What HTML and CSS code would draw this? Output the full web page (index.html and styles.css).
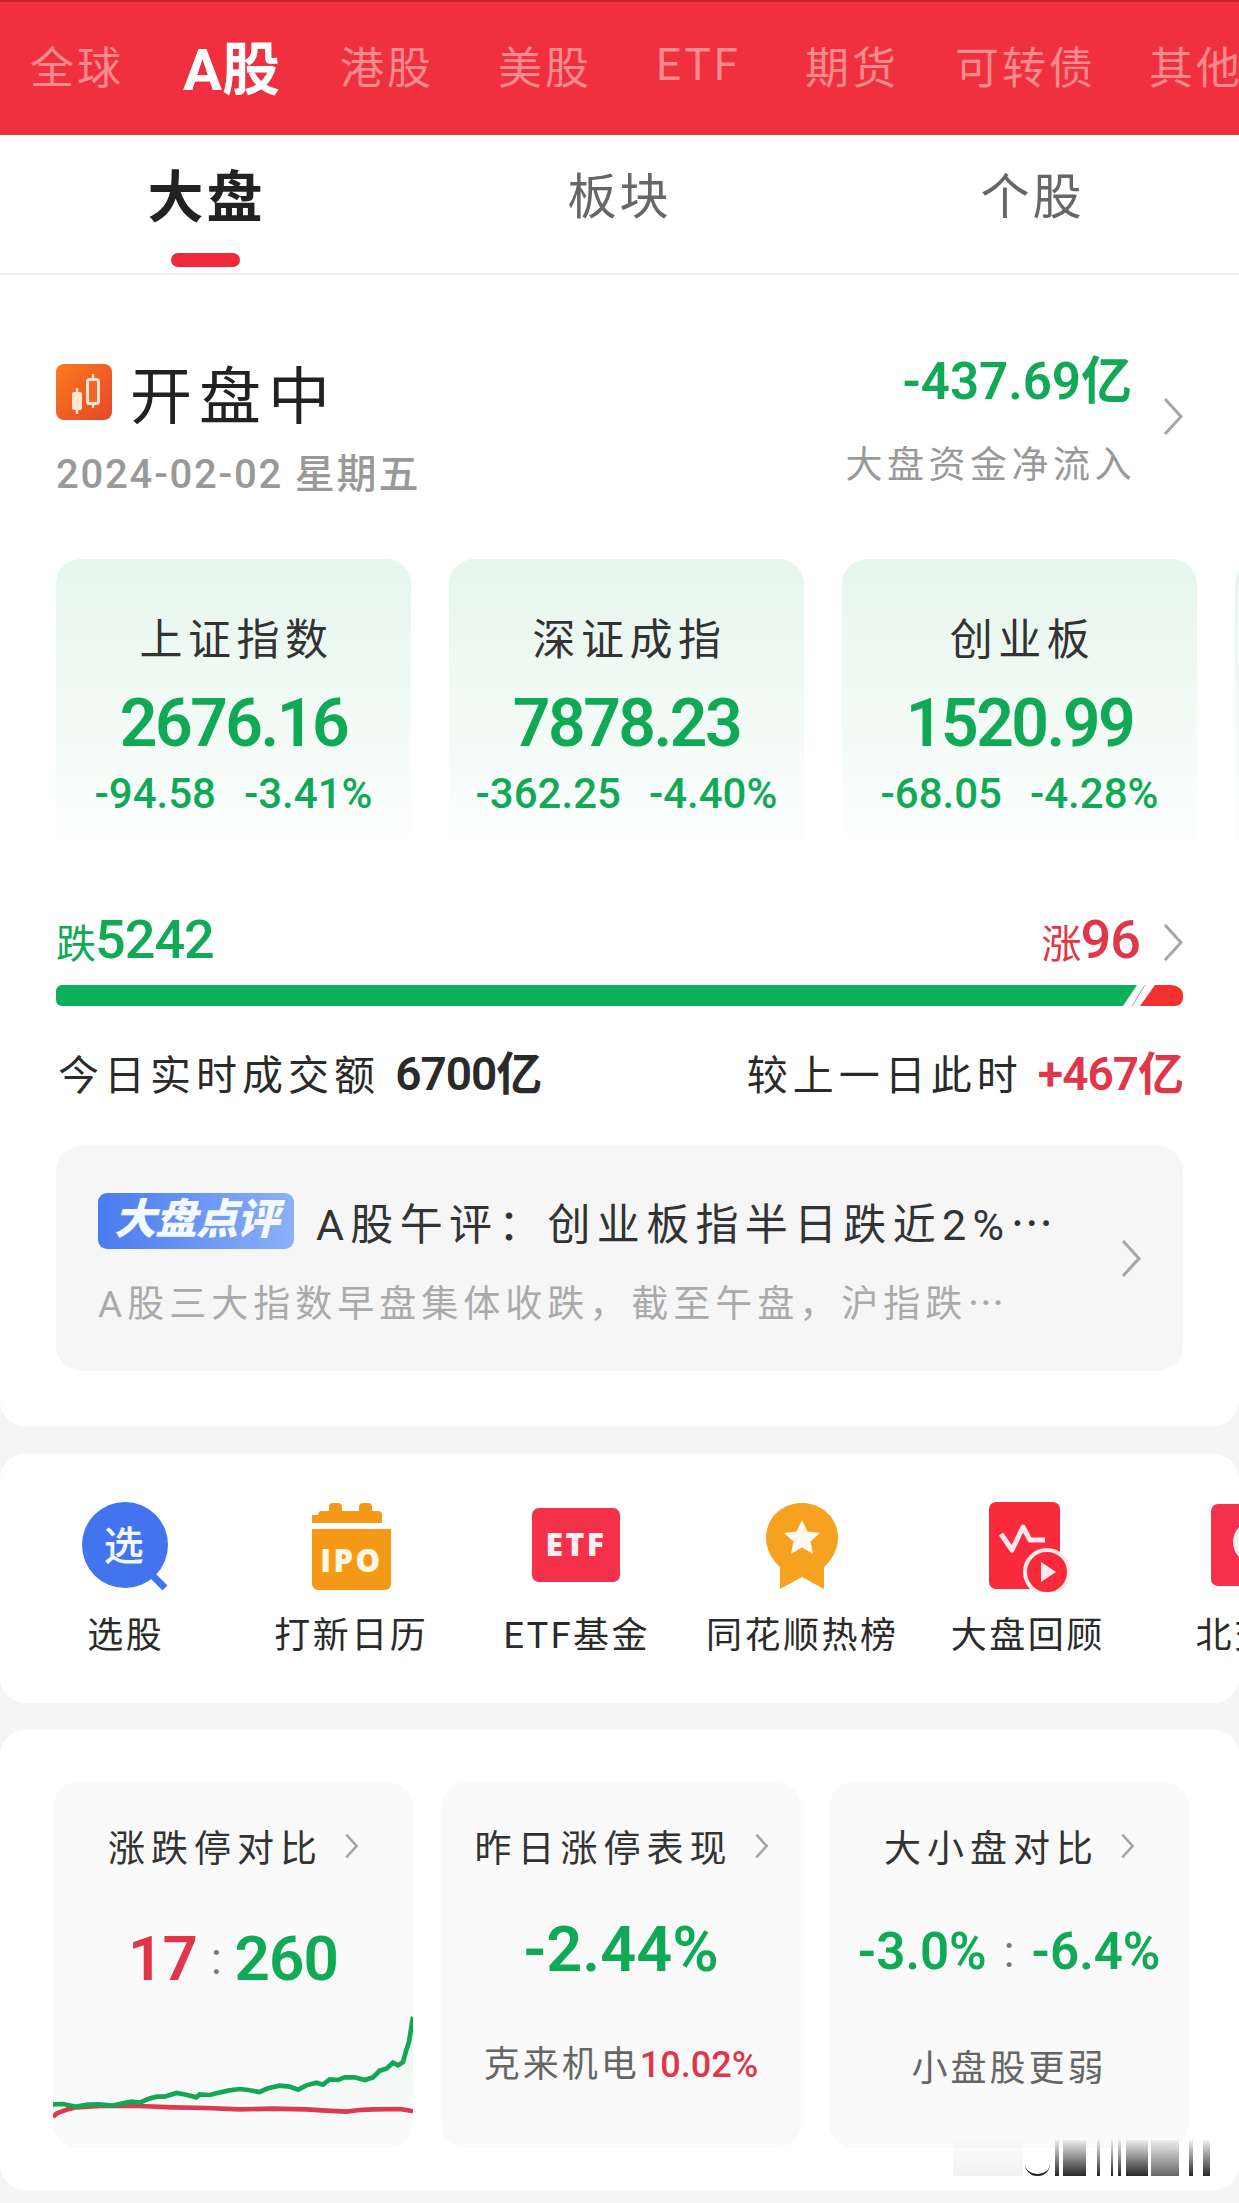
FILE: index.html
```html
<!DOCTYPE html>
<html lang="zh-CN">
    <head>
        <meta charset="utf-8">
        <title>A股 大盘</title>
        <link rel="stylesheet" href="styles.css">
    </head>
    <body>
        <div id="main">
            <div class="market-bar">
                <span class="market">全球</span>
                <span class="market active">A股</span>
                <span class="market">港股</span>
                <span class="market">美股</span>
                <span class="market">ETF</span>
                <span class="market">期货</span>
                <span class="market market-cb">可转债</span>
                <span class="market market-other">其他</span>
            </div>

            <div class="sub-tabs">
                <div class="sub-tab active">大盘<i class="tab-line"></i></div>
                <div class="sub-tab">板块</div>
                <div class="sub-tab">个股</div>
            </div>

            <div class="panel overview">
                <div class="status-row">
                    <div>
                        <div class="status-title">
                            <svg class="status-icon" viewBox="0 0 56 56">
                                <defs>
                                    <linearGradient id="orange" x1="0" y1="0" x2="1" y2="1">
                                        <stop offset="0" stop-color="#fb7a1c"/>
                                        <stop offset="1" stop-color="#e5472a"/>
                                    </linearGradient>
                                </defs>
                                <rect width="56" height="56" rx="8" fill="url(#orange)"/>
                                <path d="M21 24v26M37 10v34" stroke="#fde3d2" stroke-width="2.5"/>
                                <rect x="16" y="28" width="10" height="18" rx="2" fill="#fde3d2"/>
                                <rect x="31.5" y="15.5" width="11" height="24" rx="2" fill="#ee6a2a" stroke="#fde3d2" stroke-width="3"/>
                            </svg>
                            <span>开盘中</span>
                        </div>
                        <div class="status-date">2024-02-02 星期五</div>
                    </div>
                    <div class="flow">
                        <div>
                            <div class="flow-value">-437.69亿</div>
                            <div class="flow-label">大盘资金净流入</div>
                        </div>
                        <svg class="chevron flow-arrow" viewBox="0 0 20 37"><path d="M2 1l16 17.500L2 36"/></svg>
                    </div>
                </div>

                <div class="index-row">
                    <div class="index-card">
                        <div class="index-name">上证指数</div>
                        <div class="index-value">2676.16</div>
                        <div class="index-change"><span>-94.58</span><span>-3.41%</span></div>
                    </div>
                    <div class="index-card">
                        <div class="index-name">深证成指</div>
                        <div class="index-value">7878.23</div>
                        <div class="index-change"><span>-362.25</span><span>-4.40%</span></div>
                    </div>
                    <div class="index-card">
                        <div class="index-name">创业板</div>
                        <div class="index-value">1520.99</div>
                        <div class="index-change"><span>-68.05</span><span>-4.28%</span></div>
                    </div>
                    <div class="index-card"></div>
                </div>

                <div class="count-row">
                    <div class="count green"><small>跌</small>5242</div>
                    <div class="count-right">
                        <div class="count red"><small>涨</small>96</div>
                        <svg class="chevron" viewBox="0 0 20 37"><path d="M2 1l16 17.500L2 36"/></svg>
                    </div>
                </div>

                <svg class="ratio-bar" viewBox="0 0 1127 21">
                    <path d="M6 0H1081L1067 21H6a6 6 0 0 1-6-6V6a6 6 0 0 1 6-6z" fill="#0bb05a"/>
                    <path d="M1089 0L1076 21" stroke="#9aa5a0" stroke-width="1"/>
                    <path d="M1099 0H1115a12 10 0 0 1 12 10v3a8 8 0 0 1-8 8H1084z" fill="#f5312f"/>
                </svg>

                <div class="volume-row">
                    <div>今日实时成交额 <b>6700亿</b></div>
                    <div>较上一日此时 <b class="red">+467亿</b></div>
                </div>

                <div class="comment">
                    <div class="comment-body">
                        <div class="comment-title">
                            <span class="comment-badge">大盘点评</span>
                            <span>A股午评：创业板指半日跌近2%<span class="cjk">…</span></span>
                        </div>
                        <div class="comment-text">A股三大指数早盘集体收跌，截至午盘，沪指跌<span class="cjk">…</span></div>
                    </div>
                    <svg class="chevron" viewBox="0 0 20 37"><path d="M2 1l16 17.500L2 36"/></svg>
                </div>
            </div>

            <div class="panel shortcuts">
                <div class="shortcut">
                    <svg class="shortcut-icon" viewBox="0 0 90 90">
                        <ellipse cx="44" cy="43" rx="43" ry="43" fill="#4274f0"/>
                        <path d="M68 70l16 16" stroke="#4274f0" stroke-width="7"/>
                        <text x="44" y="58" class="icon-cjk" font-size="40" fill="#f4f7ff" text-anchor="middle">选</text>
                    </svg>
                    <div>选股</div>
                </div>
                <div class="shortcut">
                    <svg class="shortcut-icon" viewBox="0 0 90 90">
                        <path d="M12 11a4 4 0 0 1 4-4h7v-4a4 4 0 0 1 4-4h5a4 4 0 0 1 4 4v4h17v-4a4 4 0 0 1 4-4h5a4 4 0 0 1 4 4v4h6a4 4 0 0 1 4 4v8H6v-8a4 4 0 0 1 0 0z" fill="#f59a16" transform="translate(0 2)"/>
                        <path d="M6 27h79v55a6 6 0 0 1-6 6H12a6 6 0 0 1-6-6z" fill="#f59a16"/>
                        <text x="45.500" y="70" class="icon-latin" font-size="31" fill="#fff6e4" text-anchor="middle">IPO</text>
                    </svg>
                    <div>打新日历</div>
                </div>
                <div class="shortcut">
                    <svg class="shortcut-icon" viewBox="0 0 90 90">
                        <rect y="6" width="88" height="74" rx="7" fill="#f5304a"/>
                        <text x="44" y="54" class="icon-latin" font-size="32" fill="#fdeef0" text-anchor="middle">ETF</text>
                    </svg>
                    <div>ETF基金</div>
                </div>
                <div class="shortcut">
                    <svg class="shortcut-icon" viewBox="0 0 90 90">
                        <path d="M45 1C25 1 9 16 9 36c0 13 8 24 14 29v22l22-12 22 12V65c6-5 14-16 14-29C81 16 65 1 45 1z" fill="#f6a11f"/>
                        <path d="M45 18l5.500 11.500 12.500 1.500-9.500 8.500 2.500 12.500-11-6.500-11 6.500 2.500-12.500-9.500-8.500 12.500-1.500z" fill="#fffaf0"/>
                    </svg>
                    <div>同花顺热榜</div>
                </div>
                <div class="shortcut">
                    <svg class="shortcut-icon" viewBox="0 0 90 90">
                        <rect x="6" width="71" height="87" rx="7" fill="#f92a3c"/>
                        <path d="M18 32l11 16 11-23 7 13h15" fill="none" stroke="#fdeaec" stroke-width="5" stroke-linejoin="round"/>
                        <circle cx="64" cy="70" r="22" fill="#f92a3c" stroke="#fdeaec" stroke-width="4"/>
                        <path d="M58 60l15 10-15 10z" fill="#fdeaec"/>
                    </svg>
                    <div>大盘回顾</div>
                </div>
                <div class="shortcut">
                    <svg class="shortcut-icon" viewBox="0 0 90 90">
                        <rect x="3" y="2" width="88" height="82" rx="7" fill="#f5304a"/>
                        <circle cx="47" cy="40" r="22" fill="#fdeef0"/>
                    </svg>
                    <div>北交所</div>
                </div>
            </div>

            <div class="panel compare">
                <div class="compare-card">
                    <div class="compare-title">涨跌停对比<svg class="chevron small" viewBox="0 0 20 37"><path d="M2 1l16 17.500L2 36"/></svg></div>
                    <div class="limit-value"><span class="red">17</span><i>:</i><span class="green">260</span></div>
                    <svg class="limit-chart" viewBox="40 0 1080 444" preserveAspectRatio="none">
                        <defs>
                            <linearGradient id="chartfill" x1="0" y1="0" x2="0" y2="1">
                                <stop offset="0" stop-color="#d9f2e3" stop-opacity=".9"/>
                                <stop offset="1" stop-color="#fafafa" stop-opacity="0"/>
                            </linearGradient>
                        </defs>
                        <path d="M1120 50L1110 110 1100 150 1085 190 1060 190 1020 212 975 238 930 232 870 238 830 248 775 268 720 258 660 275 600 268 530 282 470 290 410 280 350 290 300 305 300 400 1120 400z" fill="url(#chartfill)"/>
                        <path class="line-red" d="M40 350L52 340 65 335 85 328 110 322 180 318 300 318 400 322 500 324 600 328 700 326 800 328 860 332 920 335 960 330 1000 328 1080 327 1100 330 1120 334"/>
                        <path class="line-green" d="M40 313L70 312 110 320 145 314 180 313 215 317 250 310 275 305 300 308 325 297 350 290 375 290 410 279 440 284 470 292 480 283 510 285 530 280 565 272 600 267 625 270 660 276 685 265 720 257 750 260 775 269 800 256 830 248 850 254 870 238 895 240 915 232 945 232 975 240 1000 232 1020 212 1040 206 1060 188 1075 196 1090 186 1100 150 1108 125 1112 100 1120 50"/>
                    </svg>
                </div>
                <div class="compare-card">
                    <div class="compare-title">昨日涨停表现<svg class="chevron small" viewBox="0 0 20 37"><path d="M2 1l16 17.500L2 36"/></svg></div>
                    <div class="big-value green">-2.44%</div>
                    <div class="compare-note">克来机电<span class="red">10.02%</span></div>
                </div>
                <div class="compare-card">
                    <div class="compare-title">大小盘对比<svg class="chevron small" viewBox="0 0 20 37"><path d="M2 1l16 17.500L2 36"/></svg></div>
                    <div class="pair-value green"><span>-3.0%</span><i>:</i><span>-6.4%</span></div>
                    <div class="compare-note pair-note">小盘股更弱</div>
                </div>
                <!-- blurred watermark over the corner -->
                <div class="watermark">
                    <i class="mark-soft" style="width: 70px"></i>
                    <i class="mark-u"></i>
                    <i style="width: 4px; margin-left: 5px"></i>
                    <i style="width: 23px; margin-left: 4px"></i>
                    <i style="width: 3px; margin-left: 11px"></i>
                    <i style="width: 2px; margin-left: 11px"></i>
                    <i style="width: 3px; margin-left: 5px"></i>
                    <i style="width: 22px; margin-left: 5px"></i>
                    <i class="mark-grey" style="width: 28px; margin-left: 3px"></i>
                    <i style="width: 4px; margin-left: 10px"></i>
                    <i style="width: 7px; margin-left: 10px"></i>
                </div>
            </div>
        </div>
    </body>
</html>
```

FILE: styles.css
```css
*  {
    box-sizing: border-box;
}

html, body  {
    margin: 0;
    padding: 0;
}

body  {
    background-color: #f5f5f5;
    font-family: Roboto, "Noto Sans CJK SC", sans-serif;
    color: #333333;
}

#main  {
    width: 1239px;
    height: 2203px;
    overflow: hidden;
}

.red  {
    color: #e0364a;
}

.green  {
    color: #10a955;
}

.cjk  {
    font-family: "Noto Sans CJK SC", sans-serif;
}

/* top market tabs */
.market-bar  {
    display: flex;
    align-items: center;
    gap: 64px;
    height: 135px;
    padding: 0 0 8px 30px;
    background-color: #f0303e;
    border-top: 2px solid #c9202d;
    white-space: nowrap;
    overflow: hidden;
}

.market  {
    flex-shrink: 0;
    font-size: 44px;
    letter-spacing: 3px;
    color: #f68a8e;
}

.market.active  {
    margin-left: -5px;
    margin-right: -4px;
    font-size: 58px;
    font-weight: 700;
    letter-spacing: 0;
    color: #ffffff;
}

.market-cb  {
    margin-left: -8px;
}

.market-other  {
    margin-left: -11px;
}

/* sub tabs */
.sub-tabs  {
    display: grid;
    grid-template-columns: repeat(3, 1fr);
    height: 140px;
    background-color: #ffffff;
    border-bottom: 2px solid #eeeeee;
}

.sub-tab  {
    display: flex;
    flex-direction: column;
    align-items: center;
    padding-top: 30px;
    font-size: 49px;
    line-height: 66px;
    letter-spacing: 3px;
    color: #666666;
}

.sub-tab.active  {
    font-size: 56px;
    font-weight: 700;
    color: #222222;
}

.tab-line  {
    display: block;
    width: 69px;
    height: 14px;
    margin-top: 22px;
    margin-right: 3px;
    border-radius: 7px;
    background-color: #f0283c;
}

.panel  {
    background-color: #ffffff;
}

/* overview panel */
.overview  {
    height: 1151px;
    padding: 82px 56px 0;
    border-radius: 0 0 25px 25px;
    overflow: hidden;
}

.status-row  {
    display: flex;
    justify-content: space-between;
    height: 136px;
}

.status-title  {
    display: flex;
    align-items: center;
    gap: 18px;
    height: 70px;
    font-size: 62px;
    letter-spacing: 7px;
    color: #222222;
}

.status-icon  {
    width: 56px;
    height: 56px;
}

.status-date  {
    margin-top: 28px;
    font-size: 40px;
    line-height: 40px;
    font-weight: 500;
    letter-spacing: 1.800px;
    color: #999999;
}

.flow  {
    display: flex;
    align-items: flex-start;
    gap: 31px;
    text-align: right;
}

.flow-value  {
    font-size: 51px;
    line-height: 50px;
    font-weight: 600;
    color: #10a955;
}

.flow-label  {
    margin-top: 38px;
    font-size: 37px;
    line-height: 42px;
    letter-spacing: 4.500px;
    margin-right: -4px;
    color: #999999;
}

.chevron  {
    flex-shrink: 0;
    width: 20px;
    height: 37px;
    fill: none;
    stroke: #a6a6a6;
    stroke-width: 3;
}

.flow-arrow  {
    margin-top: 41px;
}

.chevron.small  {
    width: 13px;
    height: 26px;
    margin-left: 22px;
    stroke-width: 4;
}

/* index cards */
.index-row  {
    display: flex;
    gap: 38px;
    margin-top: 66px;
}

.index-card  {
    flex-shrink: 0;
    width: 355px;
    height: 305px;
    padding-top: 59px;
    border-radius: 25px 25px 0 0;
    background: linear-gradient(#e5f6ed, #ffffff);
    text-align: center;
}

.index-name  {
    font-size: 43px;
    line-height: 44px;
    letter-spacing: 5.500px;
    margin-right: -6px;
    color: #333333;
}

.index-value  {
    margin-top: 27px;
    font-size: 66px;
    line-height: 70px;
    font-weight: 600;
    letter-spacing: -2.500px;
    color: #10a955;
}

.index-change  {
    display: flex;
    justify-content: center;
    gap: 28px;
    margin-top: 13px;
    font-size: 42px;
    line-height: 44px;
    font-weight: 500;
    letter-spacing: 0;
    color: #10a955;
}

/* advance / decline */
.count-row  {
    display: flex;
    justify-content: space-between;
    align-items: center;
    height: 48px;
    margin-top: 54px;
}

.count  {
    font-size: 54px;
    font-weight: 500;
    line-height: 48px;
    letter-spacing: -1px;
}

.count small  {
    font-size: 40px;
    font-weight: 400;
}

.count-right  {
    display: flex;
    align-items: center;
    gap: 23px;
}

.ratio-bar  {
    display: block;
    width: 1127px;
    height: 21px;
    margin-top: 19px;
}

.volume-row  {
    display: flex;
    justify-content: space-between;
    height: 50px;
    margin-top: 43px;
    font-size: 41px;
    line-height: 50px;
    letter-spacing: 5px;
    color: #2a2a2a;
    padding-left: 2px;
}

.volume-row b  {
    font-size: 46px;
    font-weight: 600;
    letter-spacing: -1px;
}

/* comment box */
.comment  {
    display: flex;
    align-items: center;
    justify-content: space-between;
    height: 225px;
    margin-top: 47px;
    padding: 0 42px;
    border-radius: 25px;
    background-color: #f6f6f7;
}

.comment-body  {
    padding-top: 3px;
}

.comment-title  {
    display: flex;
    align-items: center;
    gap: 22px;
    height: 56px;
    font-size: 43px;
    letter-spacing: 6.300px;
    white-space: nowrap;
}

.comment-badge  {
    width: 196px;
    height: 56px;
    border-radius: 9px;
    background: linear-gradient(90deg, #4a7bf0, #8bb0f6);
    font-size: 42px;
    line-height: 54px;
    font-weight: 900;
    font-style: italic;
    text-align: center;
    letter-spacing: -1px;
    color: #f4f8ff;
}

.comment-text  {
    margin-top: 29px;
    font-size: 37px;
    line-height: 46px;
    letter-spacing: 5px;
    color: #aaaaaa;
    white-space: nowrap;
}

/* shortcuts */
.shortcuts  {
    display: flex;
    height: 249px;
    margin-top: 28px;
    padding: 48px 0 0 13px;
    border-radius: 25px;
    overflow: hidden;
    white-space: nowrap;
}

.shortcut  {
    flex-shrink: 0;
    width: 225.500px;
    font-size: 36px;
    line-height: 48px;
    letter-spacing: 2.500px;
    text-align: center;
    color: #2a2a2a;
}

.shortcut-icon  {
    display: block;
    width: 90px;
    height: 90px;
    margin: 0 auto 20px;
}

.icon-cjk  {
    font-family: "Noto Sans CJK SC", sans-serif;
    font-weight: 500;
}

.icon-latin  {
    font-family: "Open Sans", sans-serif;
    font-weight: 800;
}

/* compare cards */
.compare  {
    position: relative;
    display: flex;
    height: 460px;
    margin-top: 27px;
    padding: 52px 0 0 53px;
    border-radius: 25px;
}

.compare-card  {
    display: flex;
    flex-direction: column;
    align-items: center;
    width: 360px;
    height: 366px;
    margin-right: 28px;
    padding-top: 39px;
    border-radius: 25px;
    background-color: #fafafa;
    overflow: hidden;
}

.compare-title  {
    display: flex;
    align-items: center;
    height: 50px;
    font-size: 37px;
    letter-spacing: 6px;
    white-space: nowrap;
    color: #333333;
}

.limit-value  {
    display: flex;
    align-items: center;
    gap: 14px;
    margin-top: 53px;
    font-size: 62px;
    line-height: 70px;
    font-weight: 600;
    letter-spacing: -1px;
}

.limit-value i, .pair-value i  {
    font-style: normal;
    font-weight: 400;
    font-size: 44px;
    color: #777777;
}

.limit-chart  {
    flex-shrink: 0;
    width: 360px;
    height: 148px;
    margin-top: auto;
    fill: none;
}

.line-green, .line-red  {
    stroke-width: 14;
    fill: none;
}

.line-green  {
    stroke: #12a853;
}

.line-red  {
    stroke: #dd3a52;
}

.big-value  {
    margin-top: 44px;
    font-size: 63px;
    line-height: 70px;
    font-weight: 600;
}

.pair-value  {
    display: flex;
    align-items: center;
    gap: 17px;
    margin-top: 46px;
    font-size: 51px;
    line-height: 70px;
    font-weight: 600;
}

.compare-note  {
    margin-top: 58px;
    font-size: 36px;
    line-height: 44px;
    letter-spacing: 3px;
    color: #666666;
    white-space: nowrap;
}

.compare-note .red  {
    font-weight: 500;
    letter-spacing: 0;
}

.pair-note  {
    margin-top: 60px;
    letter-spacing: 3px;
}

/* watermark, overlays the corner of the page */
.watermark  {
    position: absolute;
    left: 953px;
    top: 410px;
    display: flex;
    height: 36px;
}

.watermark i  {
    display: block;
    flex-shrink: 0;
    background: linear-gradient(rgba(0, 0, 0, 0.05), rgba(0, 0, 0, 0.85));
}

.watermark i.mark-soft  {
    background: linear-gradient(rgba(0, 0, 0, 0.01), rgba(0, 0, 0, 0.05));
}

.watermark i.mark-u  {
    width: 25px;
    margin-left: 2px;
    border: solid #222222;
    border-width: 0 0 2px;
    border-radius: 0 0 12px 12px;
    background: transparent;
}

.watermark i.mark-grey  {
    background: linear-gradient(rgba(0, 0, 0, 0.05), rgba(0, 0, 0, 0.6));
}
```
